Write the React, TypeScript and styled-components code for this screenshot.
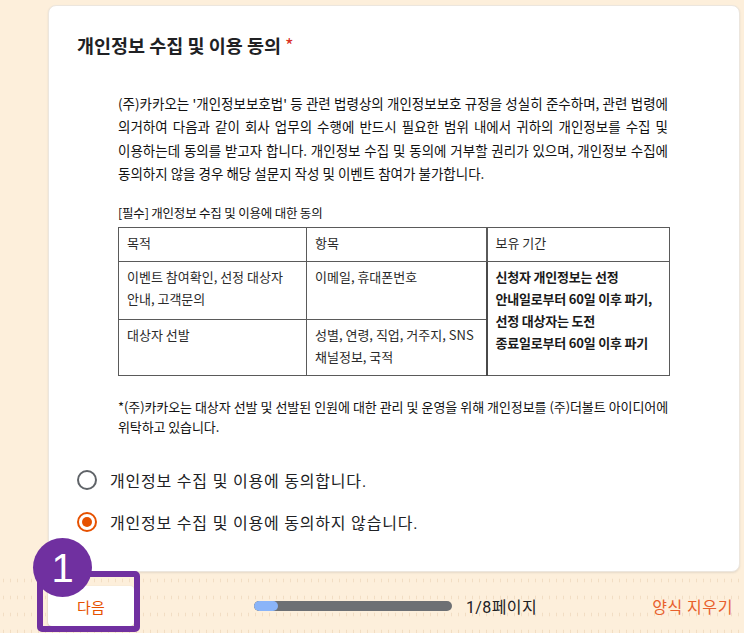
import styled, { createGlobalStyle } from 'styled-components';

const GlobalStyle = createGlobalStyle`
    html, body {
        margin: 0;
        padding: 0;
        background: #fdefdb;
    }
    body {
        font-family: Roboto, "Noto Sans CJK KR", sans-serif;
        color: #202124;
    }
`;

const Page = styled.div`
    position: relative;
    width: 744px;
    height: 633px;
    overflow: hidden;
    background: #fdefdb;
`;

const Main = styled.div`
    padding: 5px 4px 0 48px;
`;

const Card = styled.section`
    background: #fff;
    border-radius: 8px;
    border: 1px solid #ece6de;
    box-shadow: 0 1px 2px rgba(60, 64, 67, 0.12);
    padding: 27px 0 28px 28px;
    height: 567px;
    box-sizing: border-box;
`;

const Title = styled.h2`
    margin: 0;
    font-family: "Noto Sans CJK KR", sans-serif;
    font-size: 18.5px;
    font-weight: 700;
    line-height: 24px;
    color: #202124;
`;

const Required = styled.span`
    color: #d93025;
    margin-left: 4px;
    font-weight: 400;
`;

const Notice = styled.div`
    margin: 35px 0 0 41px;
    width: 550px;
    font-family: "Noto Sans CJK KR", sans-serif;
    color: #111;
`;

const Para = styled.div`
    font-size: 13.5px;
    letter-spacing: 0;
    line-height: 23.3px;
`;

const Line = styled.span<{ $justify?: boolean }>`
    display: block;
    white-space: nowrap;
    text-align: ${(p) => (p.$justify ? 'justify' : 'left')};
    text-align-last: ${(p) => (p.$justify ? 'justify' : 'left')};
`;

const TableLabel = styled.div`
    margin-top: 19px;
    font-size: 12.5px;
    letter-spacing: -0.2px;
    line-height: 18px;
`;

const Table = styled.table`
    margin-top: 5px;
    width: 551px;
    border-collapse: collapse;
    table-layout: fixed;
    font-size: 13px;
    color: #2a2a2a;

    td, th {
        border: 1px solid #5a5a5a;
        padding: 4px 8px 0;
        vertical-align: top;
        text-align: left;
        font-weight: 400;
        line-height: 22px;
    }
`;

const HeadRow = styled.tr`
    height: 34px;
`;

const BodyRow = styled.tr<{ $h: number }>`
    height: ${(p) => p.$h}px;
`;

const Keep = styled.td`
    && {
        border-left: 2px solid #4a4a4a;
        font-weight: 700;
        color: #1a1a1a;
        line-height: 21.8px;
        letter-spacing: -0.2px;
    }
`;

const Footnote = styled.div`
    margin-top: 21px;
    font-size: 13px;
    letter-spacing: -0.1px;
    line-height: 20px;
`;

const Options = styled.div`
    margin-top: 22px;
`;

const Option = styled.label`
    display: flex;
    align-items: center;
    height: 42px;
    gap: 13px;
    font-family: Roboto, "Noto Sans CJK KR", sans-serif;
    font-size: 16px;
    letter-spacing: 0.8px;
    color: #202124;
`;

const Radio = styled.span<{ $checked?: boolean }>`
    width: 20px;
    height: 20px;
    flex-shrink: 0;
    box-sizing: border-box;
    border-radius: 50%;
    border: 2px solid ${(p) => (p.$checked ? '#e65100' : '#5f6368')};
    display: flex;
    align-items: center;
    justify-content: center;

    &::after {
        content: '';
        width: 10px;
        height: 10px;
        border-radius: 50%;
        background: ${(p) => (p.$checked ? '#e65100' : 'transparent')};
    }
`;

const Footer = styled.footer`
    display: grid;
    grid-template-columns: 1fr auto 1fr;
    align-items: center;
    height: 61px;
    box-sizing: border-box;
    padding: 14px 11px 9px 48px;
    background-image: radial-gradient(rgba(214, 180, 140, 0.3) 0.6px, transparent 0.9px);
    background-size: 7px 17px;
`;

const NextButton = styled.button`
    justify-self: start;
    width: 86px;
    height: 40px;
    border: none;
    border-radius: 4px;
    background: #fff;
    box-shadow: 0 1px 2px rgba(60, 64, 67, 0.3);
    color: #e65100;
    font-family: "Noto Sans CJK KR", sans-serif;
    font-size: 15px;
    letter-spacing: 0.3px;
`;

const Progress = styled.div`
    display: flex;
    align-items: center;
    gap: 14px;
    margin-left: 10px;
`;

const Track = styled.div`
    width: 198px;
    height: 10px;
    border-radius: 5px;
    background: #6d7074;
    overflow: hidden;
`;

const Fill = styled.div`
    height: 100%;
    border-radius: 5px;
    background: #8ab4f8;
`;

const PageText = styled.span`
    font-size: 16px;
    color: #202124;
    letter-spacing: 0.4px;
`;

const ClearButton = styled.span`
    justify-self: end;
    color: #e8602c;
    font-family: "Noto Sans CJK KR", sans-serif;
    font-size: 16px;
    letter-spacing: 0.6px;
`;

const Highlight = styled.div`
    position: absolute;
    left: 37px;
    top: 571px;
    width: 103px;
    height: 61px;
    box-sizing: border-box;
    border: 6px solid #7030a0;
    border-radius: 5px;
`;

const StepBadge = styled.div`
    position: absolute;
    left: 33px;
    top: 538px;
    width: 59px;
    height: 59px;
    border-radius: 50%;
    background: #7030a0;
    color: #fff;
    display: flex;
    align-items: center;
    justify-content: center;
    font-family: "Liberation Sans", Arial, sans-serif;
    font-size: 40px;
    line-height: 1;
`;

const App = () => {
    const progress = 1 / 8;

    return (
        <Page>
            <GlobalStyle />
            <Main>
                <Card>
                    <Title>
                        개인정보 수집 및 이용 동의<Required>*</Required>
                    </Title>
                    <Notice>
                        <Para>
                            <Line $justify>(주)카카오는 '개인정보보호법' 등 관련 법령상의 개인정보보호 규정을 성실히 준수하며, 관련 법령에</Line>
                            <Line $justify>의거하여 다음과 같이 회사 업무의 수행에 반드시 필요한 범위 내에서 귀하의 개인정보를 수집 및</Line>
                            <Line $justify>이용하는데 동의를 받고자 합니다. 개인정보 수집 및 동의에 거부할 권리가 있으며, 개인정보 수집에</Line>
                            <Line>동의하지 않을 경우 해당 설문지 작성 및 이벤트 참여가 불가합니다.</Line>
                        </Para>
                        <TableLabel>[필수] 개인정보 수집 및 이용에 대한 동의</TableLabel>
                        <Table>
                            <colgroup>
                                <col style={{ width: 188 }} />
                                <col style={{ width: 180 }} />
                                <col style={{ width: 183 }} />
                            </colgroup>
                            <thead>
                                <HeadRow>
                                    <th>목적</th>
                                    <th>항목</th>
                                    <th style={{ borderLeftWidth: 2 }}>보유 기간</th>
                                </HeadRow>
                            </thead>
                            <tbody>
                                <BodyRow $h={58}>
                                    <td>이벤트 참여확인, 선정 대상자<br />안내, 고객문의</td>
                                    <td>이메일, 휴대폰번호</td>
                                    <Keep rowSpan={2}>
                                        신청자 개인정보는 선정<br />
                                        안내일로부터 60일 이후 파기,<br />
                                        선정 대상자는 도전<br />
                                        종료일로부터 60일 이후 파기
                                    </Keep>
                                </BodyRow>
                                <BodyRow $h={56}>
                                    <td>대상자 선발</td>
                                    <td>성별, 연령, 직업, 거주지, SNS<br />채널정보, 국적</td>
                                </BodyRow>
                            </tbody>
                        </Table>
                        <Footnote>
                            <Line $justify>*(주)카카오는 대상자 선발 및 선발된 인원에 대한 관리 및 운영을 위해 개인정보를 (주)더볼트 아이디어에</Line>
                            <Line>위탁하고 있습니다.</Line>
                        </Footnote>
                    </Notice>
                    <Options>
                        <Option>
                            <Radio />
                            개인정보 수집 및 이용에 동의합니다.
                        </Option>
                        <Option>
                            <Radio $checked />
                            개인정보 수집 및 이용에 동의하지 않습니다.
                        </Option>
                    </Options>
                </Card>
            </Main>
            <Footer>
                <NextButton>다음</NextButton>
                <Progress>
                    <Track>
                        <Fill style={{ width: `${Math.round(progress * 100 * 0.95)}%` }} />
                    </Track>
                    <PageText>1/8페이지</PageText>
                </Progress>
                <ClearButton>양식 지우기</ClearButton>
            </Footer>
            <Highlight />
            <StepBadge>1</StepBadge>
        </Page>
    );
};

export default App;
